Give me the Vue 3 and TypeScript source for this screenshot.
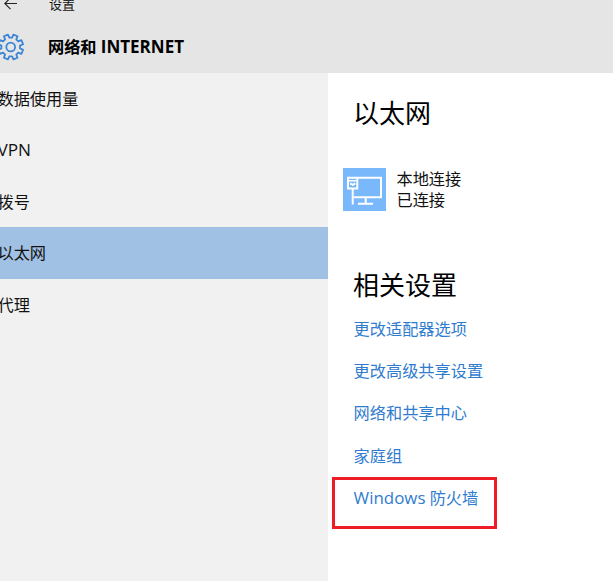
<script setup lang="ts">
interface NavItem {
  label: string
  active?: boolean
}

const navItems: NavItem[] = [
  { label: '数据使用量' },
  { label: 'VPN' },
  { label: '拨号' },
  { label: '以太网', active: true },
  { label: '代理' },
]

const links: string[] = ['更改适配器选项', '更改高级共享设置', '网络和共享中心', '家庭组']

// Outline of an eight-toothed gear centred on the origin.
function gearPath(outer: number, root: number): string {
  const points: string[] = []
  const add = (radius: number, degrees: number) => {
    const a = (degrees * Math.PI) / 180
    points.push(`${(radius * Math.cos(a)).toFixed(2)} ${(radius * Math.sin(a)).toFixed(2)}`)
  }
  for (let i = 0; i < 8; i++) {
    const mid = 22.5 + i * 45
    add(root, mid - 14)
    add(outer, mid - 10)
    add(outer, mid + 10)
    add(root, mid + 14)
  }
  return `M${points.join('L')}Z`
}

const gear = gearPath(12.7, 9.4)
</script>

<template>
  <div class="window">
    <header class="header">
      <div class="titlebar">
        <svg class="back" width="18" height="14" viewBox="0 0 18 14">
          <path d="M17 6.5H4.8M10.5 .8L4.8 6.5L10.5 12.2" />
        </svg>
        <span class="app-name">设置</span>
      </div>
      <div class="heading">
        <svg class="gear" width="26" height="28" viewBox="-10.7 -14 26 28">
          <path :d="gear" />
          <circle r="4.4" />
        </svg>
        <h1>网络和 <span class="latin">INTERNET</span></h1>
      </div>
    </header>
    <div class="body">
      <nav class="nav">
        <a v-for="item in navItems" :key="item.label" class="nav-item" :class="{ active: item.active }">{{ item.label }}</a>
      </nav>
      <main class="content">
        <h2>以太网</h2>
        <div class="connection">
          <svg class="tile" width="43" height="43" viewBox="0 0 43 43">
            <path d="M15 9.7H38V29.3H11M22.7 29.3V35.5M15 35.8H30" />
            <path d="M5 9.7H14.3V20.5H5ZM9.7 20.5V36.5" />
            <path class="plug" d="M6 12.7H13.5M7.8 14.8V16.2H11.6V14.8M9.7 16V18" />
          </svg>
          <div class="status">
            <span>本地连接</span>
            <span>已连接</span>
          </div>
        </div>
        <h2 class="related">相关设置</h2>
        <div class="links">
          <a v-for="link in links" :key="link">{{ link }}</a>
          <a class="marked"><span class="latin">Windows</span> 防火墙</a>
        </div>
      </main>
    </div>
  </div>
</template>

<style>
body {
  margin: 0;
  overflow: hidden;
}
</style>

<style scoped>
.window {
  display: flex;
  flex-direction: column;
  width: 613px;
  height: 581px;
  overflow: hidden;
  background: #fff;
  color: #111;
  font-family: "Open Sans", "Noto Sans CJK SC", sans-serif;
  font-size: 16.2px;
}
.header {
  flex: none;
  height: 72.5px;
  overflow: hidden;
  background: #e5e5e5;
}
.titlebar {
  display: flex;
  align-items: flex-start;
  height: 33px;
}
.back {
  flex: none;
  margin-top: -3px;
  fill: none;
  stroke: #222;
  stroke-width: 1.1;
}
.app-name {
  margin: -6px 0 0 31px;
  font-size: 13px;
  line-height: 20px;
}
.heading {
  display: flex;
  align-items: center;
  height: 28px;
}
.gear {
  flex: none;
  fill: none;
  stroke: #3b86d6;
  stroke-width: 1.8;
  stroke-linejoin: round;
}
h1 {
  margin: 0 0 0 22px;
  color: #000;
  font-size: 16.2px;
  font-weight: 700;
  line-height: 28px;
  white-space: nowrap;
}
h1 .latin {
  font-size: 17px;
}
.body {
  display: flex;
  flex: 1;
  min-height: 0;
}
.nav {
  flex: none;
  width: 328px;
  background: #f1f1f1;
}
.nav-item {
  display: block;
  height: 51.5px;
  line-height: 53.5px;
  text-indent: -2.5px;
  white-space: nowrap;
}
.nav-item:nth-child(2) {
  font-size: 17.2px;
  line-height: 51.5px;
}
.nav-item.active {
  background: #a1c1e4;
}
.content {
  flex: 1;
  padding: 20px 0 0 25px;
}
h2 {
  margin: 0;
  color: #000;
  font-size: 26px;
  font-weight: 400;
  line-height: 40px;
}
.connection {
  display: flex;
  gap: 10.5px;
  height: 43px;
  margin: 35.5px 0 0 -10px;
}
.tile {
  flex: none;
  background: #78b8fb;
  fill: none;
  stroke: #fff;
  stroke-width: 2;
}
.plug {
  stroke-width: 1.5;
}
.status {
  display: flex;
  flex-direction: column;
  padding-top: 0.5px;
  line-height: 21.3px;
}
.related {
  margin-top: 53.5px;
}
.links {
  display: flex;
  flex-direction: column;
  align-items: flex-start;
  margin: 3.5px 0 0 0.6px;
  color: #2f7ccf;
}
.links a {
  height: 42.2px;
  line-height: 42.2px;
  white-space: nowrap;
}
.links .marked {
  box-sizing: border-box;
  width: 165px;
  height: 52.5px;
  margin-left: -21.6px;
  padding-left: 18.6px;
  border: 3px solid #ed1c27;
  line-height: 36px;
}
.marked .latin {
  font-size: 16.9px;
}
</style>
